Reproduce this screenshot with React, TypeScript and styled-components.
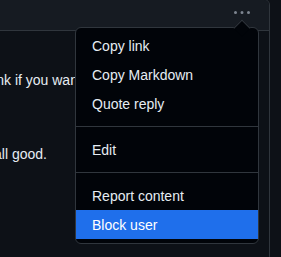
import React from 'react';
import styled, { createGlobalStyle } from 'styled-components';

const GlobalStyle = createGlobalStyle`
  html, body {
    margin: 0;
    padding: 0;
    background: #0d1117;
  }
  body {
    font-family: "Liberation Sans", Arial, sans-serif;
    color: #e6edf3;
  }
`;

const Page = styled.div`
  position: relative;
  width: 281px;
  height: 257px;
  overflow: hidden;
  background: #0d1117;
`;

const Comment = styled.div`
  box-sizing: border-box;
  width: 290px;
  margin: -1px 0 0 -20px;
  border: 1px solid #30363d;
  border-radius: 6px;
  overflow: hidden;
`;

const CommentHeader = styled.div`
  box-sizing: border-box;
  height: 31px;
  padding: 5px 19px 0 0;
  display: flex;
  justify-content: flex-end;
  align-items: flex-start;
  background: #161b22;
  border-bottom: 1px solid #30363d;
`;

const KebabButton = styled.button`
  display: flex;
  padding: 0;
  border: 0;
  background: transparent;
  color: #7d8590;
`;

const CommentBody = styled.div`
  height: 191px;
  padding: 39px 16px 0;
  background: #0d1117;
  font-size: 14px;
  line-height: 21px;
`;

const Paragraph = styled.p<{ $shift: number; $gap: number }>`
  margin: 0 0 ${p => p.$gap}px ${p => p.$shift}px;
  white-space: nowrap;
  color: #e6edf3;
`;

const Menu = styled.ul`
  position: absolute;
  top: 27px;
  left: 75px;
  box-sizing: border-box;
  width: 184px;
  margin: 0;
  padding: 3px 0 4px;
  list-style: none;
  background: #010409;
  border: 1px solid #30363d;
  border-radius: 6px;
  font-size: 14px;

  &::before {
    content: '';
    position: absolute;
    top: -6px;
    right: 10px;
    width: 11px;
    height: 11px;
    background: #010409;
    border-top: 1px solid #30363d;
    border-left: 1px solid #30363d;
    transform: rotate(45deg);
  }
`;

const MenuItem = styled.li<{ $active?: boolean }>`
  position: relative;
  height: 29px;
  display: flex;
  align-items: center;
  padding: 0 16px;
  color: ${p => (p.$active ? '#ffffff' : '#e6edf3')};
  background: ${p => (p.$active ? '#1f6feb' : 'transparent')};
`;

const Divider = styled.li`
  height: 1px;
  margin: 8px 0;
  background: #30363d;
`;

const KebabIcon = () => (
  <svg width="16" height="16" viewBox="0 0 16 16" fill="currentColor">
    <path d="M8 9a1.5 1.5 0 1 0 0-3 1.5 1.5 0 0 0 0 3ZM1.5 9a1.5 1.5 0 1 0 0-3 1.5 1.5 0 0 0 0 3Zm13 0a1.5 1.5 0 1 0 0-3 1.5 1.5 0 0 0 0 3Z" />
  </svg>
);

const App: React.FC = () => (
  <Page>
    <GlobalStyle />
    <Comment>
      <CommentHeader>
        <KebabButton aria-label="Show options">
          <KebabIcon />
        </KebabButton>
      </CommentHeader>
      <CommentBody>
        <Paragraph $shift={-7} $gap={53}>link if you want to talk it through.</Paragraph>
        <Paragraph $shift={-3} $gap={0}>all good.</Paragraph>
      </CommentBody>
    </Comment>
    <Menu role="menu">
      <MenuItem>Copy link</MenuItem>
      <MenuItem>Copy Markdown</MenuItem>
      <MenuItem>Quote reply</MenuItem>
      <Divider />
      <MenuItem>Edit</MenuItem>
      <Divider />
      <MenuItem>Report content</MenuItem>
      <MenuItem $active>Block user</MenuItem>
    </Menu>
  </Page>
);

export default App;
